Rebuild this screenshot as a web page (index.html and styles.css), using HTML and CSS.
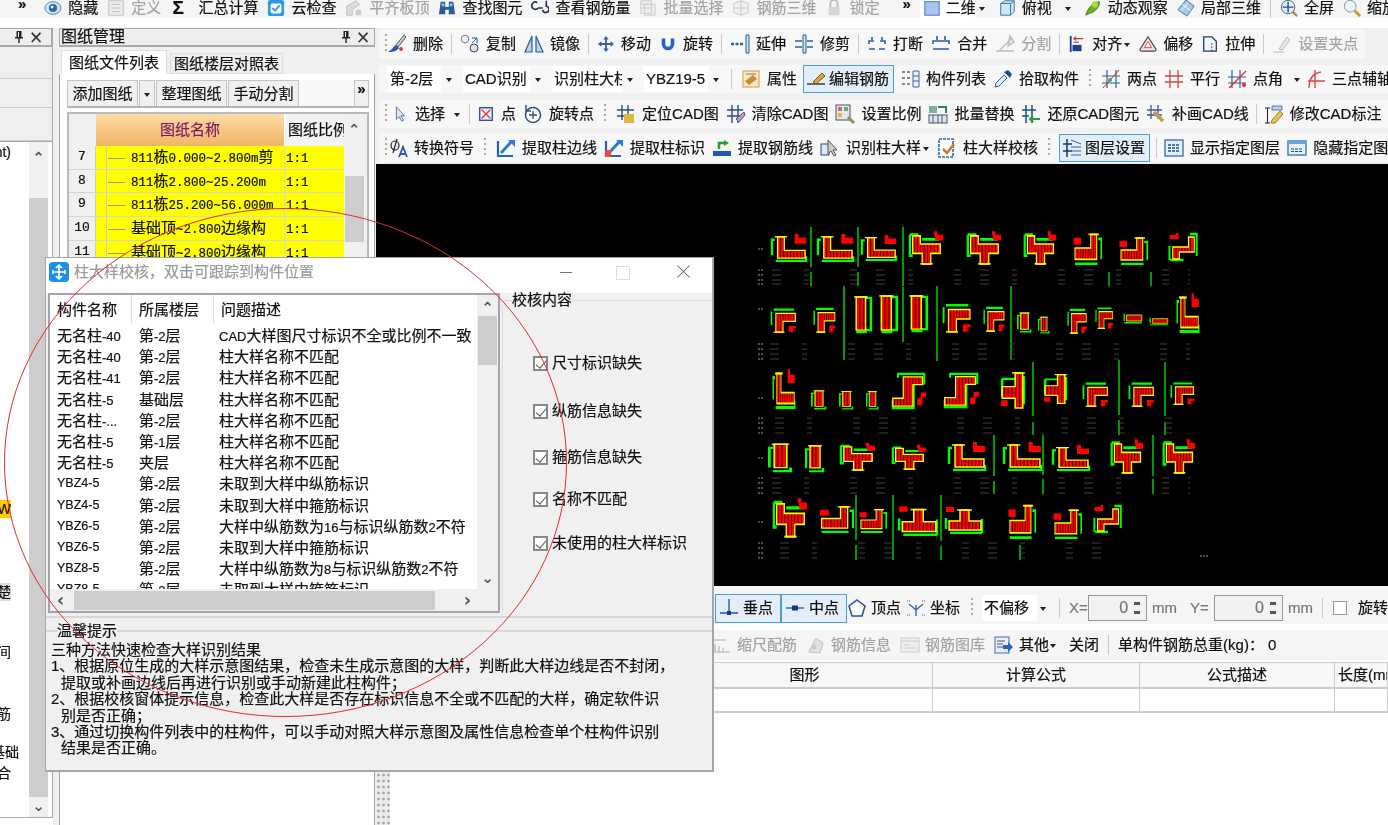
FILE: index.html
```html
<!DOCTYPE html>
<html lang="zh-CN">
<head>
<meta charset="utf-8">
<title>柱大样校核</title>
<link rel="stylesheet" href="styles.css">
</head>
<body>
<svg class="defs" aria-hidden="true">
<defs>
<pattern id="h" width="3.500" height="3" patternUnits="userSpaceOnUse"><rect width="3.500" height="3" fill="#f00"/><rect width="1" height="3" fill="#300"/></pattern>
<symbol id="L" viewBox="0 0 40 30" preserveAspectRatio="none"><path class="g" d="M5 7H2V23M6 29H38V24"/><path class="c" d="M8 4H15V18H37V26H8Z"/><path class="y" d="M5 4H18"/><path class="l" d="M26 1h4v4h8v6H26z"/></symbol>
<symbol id="J" viewBox="0 0 40 30" preserveAspectRatio="none"><path class="g" d="M35 7H39V25M4 29H34"/><path class="c" d="M25 3H33V25H4V15H25Z"/><path class="y" d="M22 3H36"/><path class="l" d="M2 6h10v6H2z"/></symbol>
<symbol id="G" viewBox="0 0 40 30" preserveAspectRatio="none"><path class="g" d="M5 3H33M2 5V20"/><path class="c" d="M8 7H35V16H18V28H8Z"/><path class="y" d="M5 28H20"/><path class="l" d="M26 21h10v3h-4v4h-6z"/></symbol>
<symbol id="T" viewBox="0 0 40 30" preserveAspectRatio="none"><path class="g" d="M3 4V22H6M3 4H12M16 8H34"/><path class="c" d="M6 5H14V12H35V20H25V29H16V20H6Z"/><path class="y" d="M14 29H27"/><path class="l" d="M28 1h4v3h6v5h-8z"/></symbol>
<symbol id="U" viewBox="0 0 40 30" preserveAspectRatio="none"><path class="g" d="M2 14V25M6 29H38M38 15V29"/><path class="c" d="M16 6H25V17H37V26H5V17H16Z"/><path class="y" d="M13 6H28"/><path class="l" d="M2 3h8v5H2z"/></symbol>
<symbol id="I" viewBox="0 0 20 40" preserveAspectRatio="none"><path class="g" d="M13 3H18V36H13M4 38H14"/><path class="c" d="M4 2H13V36H4Z"/><path class="y" d="M2 2H15"/></symbol>
<symbol id="K" viewBox="0 0 20 40" preserveAspectRatio="none"><path class="g" d="M4 12H1V34M4 38H18V34"/><path class="c" d="M5 8H15V34H5Z"/><path class="y" d="M3 8H17"/></symbol>
<symbol id="H" viewBox="0 0 40 30" preserveAspectRatio="none"><path class="g" d="M4 8V20M4 23H36"/><path class="c" d="M8 10H36V20H8Z"/></symbol>
<symbol id="S" viewBox="0 0 40 40" preserveAspectRatio="none"><path class="g" d="M8 7V3H38V14M26 14V38H2V30"/><path class="c" d="M14 6H36V14H25V36H2V28H14Z"/><path class="l" d="M34 22h6v5h-4v8h-6v-7h4z"/></symbol>
<symbol id="E" viewBox="0 0 24 40" preserveAspectRatio="none"><path class="g" d="M2 8H16M2 8V26M22 5V34"/><path class="c" d="M14 2H21V38H14V28H2V16H14Z"/><path class="y" d="M11 2H23"/><path class="l" d="M1 30h6v6H1z"/></symbol>
<symbol id="Z" viewBox="0 0 40 30" preserveAspectRatio="none"><path class="g" d="M28 2H36V24M4 28H20M3 14V28"/><path class="c" d="M26 5H33V20H15V27H7V15H26Z"/><path class="l" d="M3 3h8v-2h3v6H3z"/></symbol>

<symbol id="i-pin" viewBox="0 0 12 14"><path d="M3.500 1H8.500V7H10V8.500H6.700V13H5.300V8.500H2V7H3.500ZM5 2V7H6V2Z" fill="#222" fill-rule="evenodd"/></symbol>
<symbol id="i-eye" viewBox="0 0 20 20"><ellipse cx="10" cy="10" rx="9" ry="7" fill="#cfe2f5" stroke="#4a7fb0"/><circle cx="10" cy="10" r="4.5" fill="#2c6aa8"/><circle cx="9" cy="9" r="1.5" fill="#fff"/></symbol>
<symbol id="i-doc" viewBox="0 0 20 20"><path d="M2 2H18V18H2Z M5 6H15M5 10H15M5 14H15" fill="#eee" stroke="#bbb"/></symbol>
<symbol id="i-cloud" viewBox="0 0 20 20"><rect x="1" y="1" width="18" height="18" rx="3" fill="#2b9be8"/><rect x="4" y="5" width="12" height="11" rx="2" fill="#fff"/><path d="M6 10L9 13L14 7" fill="none" stroke="#2b9be8" stroke-width="2"/></symbol>
<symbol id="i-level" viewBox="0 0 20 20"><path d="M2 18V8L12 2L16 6L8 12V18Z" fill="#ddd" stroke="#bbb"/><path d="M12 12H18V18H12Z" fill="#ccc"/></symbol>
<symbol id="i-bino" viewBox="0 0 20 20"><path d="M3 3H8V9H12V3H17L19 17H12V12H8V17H1Z" fill="#2a5c9a"/><path d="M4 5H7V8H4ZM13 5H16V8H13Z" fill="#9cc0e6"/></symbol>
<symbol id="i-glass" viewBox="0 0 20 20"><path d="M7 4A4 4 0 1 0 8 10M13 12A3.5 3.5 0 1 0 17 8V2M8 10H13" fill="none" stroke="#234" stroke-width="1.8"/></symbol>
<symbol id="i-batch" viewBox="0 0 20 20"><path d="M2 2H14V16H2ZM6 6H18V18H6ZM2 6H14M2 10H14" fill="#eee" stroke="#ccc"/></symbol>
<symbol id="i-grid" viewBox="0 0 20 20"><path d="M2 5L10 2L18 5V15L10 18L2 15ZM10 2V18M2 10H18" fill="#f1f1f1" stroke="#c4c4c4"/></symbol>
<symbol id="i-lock" viewBox="0 0 20 20"><path d="M6 9V5A4 4 0 0 1 14 5V9" fill="none" stroke="#bbb" stroke-width="2"/><rect x="4" y="9" width="12" height="9" fill="#d4d4d4"/></symbol>
<symbol id="i-sq" viewBox="0 0 20 20"><rect x="2" y="3" width="16" height="15" fill="#a9c4ee" stroke="#3e6fc4"/></symbol>
<symbol id="i-box" viewBox="0 0 20 20"><path d="M3 5L8 2H18V14L14 18H3ZM3 5H14V18M14 5L18 2" fill="#cfe6f6" stroke="#2a6d9c"/></symbol>
<symbol id="i-orbit" viewBox="0 0 20 20"><path d="M2 18C4 10 10 4 17 3C18 8 12 15 6 16Z" fill="#6cae2a" stroke="#3d7a10"/><circle cx="12" cy="6" r="3.5" fill="#b7d93a"/></symbol>
<symbol id="i-local" viewBox="0 0 20 20"><path d="M10 1L19 8L11 19L1 12Z" fill="#a7c8ea" stroke="#3a6a9a"/><path d="M6 6L15 13M12 4L5 13" stroke="#fff"/></symbol>
<symbol id="i-full" viewBox="0 0 20 20"><circle cx="9" cy="9" r="7.5" fill="#e0ecf8" stroke="#34608f"/><path d="M9 3V15M3 9H15" stroke="#24508a" stroke-width="1.6"/><path d="M14 14L19 19" stroke="#b78a2a" stroke-width="2.5"/></symbol>
<symbol id="i-zoom" viewBox="0 0 20 20"><circle cx="8" cy="8" r="6.5" fill="#eef3f8" stroke="#7a8b9c"/><path d="M13 13L19 19" stroke="#c69a2b" stroke-width="3"/></symbol>
<symbol id="i-brush" viewBox="0 0 20 20"><path d="M9 11L17 1L19 3L11 13Z" fill="#c9ced6" stroke="#555"/><path d="M9 11L12 14C9 18 5 18 1 18C5 16 6 13 9 11Z" fill="#2256b8"/><circle cx="14" cy="15" r="2" fill="#e33"/></symbol>
<symbol id="i-copy" viewBox="0 0 20 20"><circle cx="5" cy="5" r="3.8" fill="#eef" stroke="#778"/><circle cx="14" cy="14" r="4" fill="#dde" stroke="#445"/><path d="M12 4H17V9M17 4L12 9" fill="none" stroke="#25a"/></symbol>
<symbol id="i-mirror" viewBox="0 0 20 20"><path d="M8 2V18H1ZM12 2V18H19Z" fill="#bcd4ee" stroke="#2a5f9e" stroke-width="1.2"/></symbol>
<symbol id="i-move" viewBox="0 0 20 20"><path d="M10 1L13 5H11V9H15V7L19 10L15 13V11H11V15H13L10 19L7 15H9V11H5V13L1 10L5 7V9H9V5H7Z" fill="#33669e"/></symbol>
<symbol id="i-rot" viewBox="0 0 20 20"><path d="M5 4V10A5 5 0 0 0 15 10V4" fill="none" stroke="#2a62c8" stroke-width="4"/></symbol>
<symbol id="i-ext" viewBox="0 0 20 20"><path d="M16 1H19V19H16Z" fill="#cfe0f2" stroke="#2a5f9e"/><path d="M1 10H14" stroke="#2a5f9e" stroke-width="2.5" stroke-dasharray="3 1.5"/></symbol>
<symbol id="i-trim" viewBox="0 0 20 20"><path d="M9 1H12V19H9Z" fill="#cfe0f2" stroke="#2a5f9e"/><path d="M1 7H8M1 13H8M13 7H19M13 13H19" stroke="#2a5f9e" stroke-width="1.4"/></symbol>
<symbol id="i-brk" viewBox="0 0 20 20"><path d="M2 10V7H7M18 10V7H13M2 15H8M12 15H18M5 3V6M15 3V6" fill="none" stroke="#2a5f9e" stroke-width="1.6"/></symbol>
<symbol id="i-mrg" viewBox="0 0 20 20"><path d="M2 10V7H18V10M2 15H18M6 2V6M14 2V6" fill="none" stroke="#2a5f9e" stroke-width="1.6"/></symbol>
<symbol id="i-split" viewBox="0 0 20 20"><path d="M1 17H19M4 17L16 5M15 2L19 8L13 12Z" fill="#e8e8e8" stroke="#bbb" stroke-width="1.4"/></symbol>
<symbol id="i-align" viewBox="0 0 20 20"><path d="M3 1V19" stroke="#1b3f8a" stroke-width="2"/><rect x="5" y="11" width="10" height="7" fill="#1b3f8a"/><path d="M6 4H17M6 4L9 2M6 4L9 6" stroke="#c33" fill="none" stroke-width="1.2"/><path d="M6 8H12" stroke="#1b3f8a"/></symbol>
<symbol id="i-off" viewBox="0 0 20 20"><path d="M10 2L19 16A2 2 0 0 1 17 18H3A2 2 0 0 1 1 16Z" fill="#f2e1de" stroke="#444" stroke-width="1.3"/><path d="M10 7L14 14H6Z" fill="#fff" stroke="#d44"/></symbol>
<symbol id="i-str" viewBox="0 0 20 20"><path d="M3 2H12L17 7V18H3Z" fill="#f4f8fc" stroke="#123a72" stroke-width="1.4"/><path d="M12 9V18" stroke="#123a72" stroke-dasharray="2 1.5"/></symbol>
<symbol id="i-grip" viewBox="0 0 20 20"><path d="M1 18H12M7 15L15 3L18 6L10 16Z" fill="#e8e8e8" stroke="#bbb"/></symbol>
<symbol id="i-prop" viewBox="0 0 20 20"><rect x="2" y="2" width="16" height="16" fill="#fbe7c4" stroke="#d99a3a"/><path d="M4 12L12 6L16 10L8 16Z" fill="#c98f2c"/><path d="M5 5H15" stroke="#777"/></symbol>
<symbol id="i-bar" viewBox="0 0 20 20"><path d="M1 15H19" stroke="#222" stroke-width="1.3"/><path d="M7 13L16 4L19 7L10 15Z" fill="#d9a441" stroke="#7a5a1a"/></symbol>
<symbol id="i-list" viewBox="0 0 20 20"><path d="M13 2H19V18H13ZM13 7H19M13 12H19" fill="#eef" stroke="#3a6a9a"/><path d="M2 3H5M7 3H10M2 9H5M7 9H10M2 15H5M7 15H10" stroke="#567" stroke-width="1.6"/></symbol>
<symbol id="i-drop" viewBox="0 0 20 20"><path d="M2 18L3 14L11 6L14 9L6 17Z" fill="#dfefff" stroke="#2a5f9e"/><path d="M11 3L17 9L19 5L15 1Z" fill="#1c4f9c"/></symbol>
<symbol id="i-two" viewBox="0 0 20 20"><path d="M6 1V19M15 1V19M1 7H19M1 14H19" stroke="#2a5f9e" stroke-width="1.2"/><path d="M2 19L18 1" stroke="#d22"/><circle cx="9" cy="11" r="2" fill="#4a4"/></symbol>
<symbol id="i-par" viewBox="0 0 20 20"><path d="M6 1V19M14 1V19M1 7H19M1 13H19" stroke="#c84a4a" stroke-width="1.3"/></symbol>
<symbol id="i-ang" viewBox="0 0 20 20"><path d="M5 1V19M13 1V19M1 8H19M1 14H19" stroke="#2a5f9e" stroke-width="1.2"/><path d="M2 19L19 2" stroke="#e22" stroke-width="1.3"/><circle cx="17" cy="16" r="2" fill="#e22"/></symbol>
<symbol id="i-arc" viewBox="0 0 20 20"><path d="M3 19C3 9 8 4 15 3M9 1V19M2 12H19" fill="none" stroke="#d44" stroke-width="1.4"/></symbol>
<symbol id="i-cur" viewBox="0 0 20 20"><path d="M6 2V16L9 13L12 18L14 17L11 12H15Z" fill="#dfe8f5" stroke="#506a8c"/></symbol>
<symbol id="i-pt" viewBox="0 0 20 20"><rect x="3" y="3" width="14" height="14" fill="#f2f2fb" stroke="#2a4f9e" stroke-width="1.5"/><path d="M5 5L15 15M15 5L5 15" stroke="#d33" stroke-width="1.3"/></symbol>
<symbol id="i-rp" viewBox="0 0 20 20"><circle cx="10" cy="11" r="7.5" fill="#fff" stroke="#2a4f7e" stroke-width="1.5"/><path d="M10 7V15M6 11H14" stroke="#2a4f7e" stroke-width="1.3"/><path d="M3 1V7H8" fill="none" stroke="#2a4f7e" stroke-width="1.5"/></symbol>
<symbol id="i-loc" viewBox="0 0 20 20"><path d="M6 1V16M12 1V16M1 6H18M1 12H18" stroke="#1f4f8a" stroke-width="1.4"/><rect x="8" y="10" width="10" height="9" fill="#e0b93c"/></symbol>
<symbol id="i-clr" viewBox="0 0 20 20"><path d="M6 1V19M12 1V19M1 6H17M1 12H17" stroke="#1f4f8a" stroke-width="1.4"/><path d="M10 15L18 8L19 11L13 18Z" fill="#b9a0c8" stroke="#555"/></symbol>
<symbol id="i-scale" viewBox="0 0 20 20"><rect x="1" y="1" width="14" height="15" fill="#dde8f4" stroke="#456"/><rect x="3" y="3" width="4" height="4" fill="#d66"/><rect x="9" y="3" width="4" height="4" fill="#6a6"/><rect x="3" y="9" width="4" height="4" fill="#fa3"/><path d="M13 13L19 19" stroke="#986" stroke-width="3"/></symbol>
<symbol id="i-rep" viewBox="0 0 20 20"><rect x="1" y="2" width="8" height="7" fill="#7ab2a2"/><path d="M10 3H18V9" fill="none" stroke="#3a7a5a" stroke-width="2"/><rect x="1" y="11" width="18" height="8" fill="#dfe6f0" stroke="#456"/><path d="M5 11V19M10 11V19M14 11V19" stroke="#456"/></symbol>
<symbol id="i-rst" viewBox="0 0 20 20"><path d="M5 1V19M11 1V19M1 6H15M1 12H8" stroke="#1f4f8a" stroke-width="1.5"/><path d="M9 15H19M12 12L9 15L12 18" fill="none" stroke="#2a9a3a" stroke-width="2"/></symbol>
<symbol id="i-pat" viewBox="0 0 20 20"><path d="M5 1V15M12 1V15M1 6H16M1 11H16" stroke="#3a5a9a" stroke-width="1.3"/><path d="M8 8L17 17" stroke="#c89a4a" stroke-width="3.5"/></symbol>
<symbol id="i-mod" viewBox="0 0 20 20"><path d="M1 4H6M3.500 4V19M1 19H6" stroke="#222"/><path d="M8 16L16 7L19 10L11 19H7Z" fill="#e6c35a" stroke="#a07c20"/><path d="M8 2H18V6H8Z" fill="#bcd4ee" stroke="#2a5f9e" stroke-width=".8"/></symbol>
<symbol id="i-phi" viewBox="0 0 20 20"><path d="M9 1L5 15" stroke="#222" stroke-width="1.2"/><ellipse cx="7" cy="7.500" rx="4" ry="4.500" fill="none" stroke="#222" stroke-width="1.2"/><path d="M11 19L15 9L19 19M12.500 16H17.500" fill="none" stroke="#2a5fb0" stroke-width="1.8"/></symbol>
<symbol id="i-ex1" viewBox="0 0 20 20"><path d="M2 3V18H17" fill="none" stroke="#2a62b8" stroke-width="2.2"/><path d="M5 15L16 3" stroke="#2a7ad8" stroke-width="3"/><path d="M12 2H19V9Z" fill="#2a7ad8"/></symbol>
<symbol id="i-ex2" viewBox="0 0 20 20"><path d="M2 3V18H17" fill="none" stroke="#2a62b8" stroke-width="2.2"/><path d="M5 15L16 3" stroke="#2a7ad8" stroke-width="3"/><path d="M12 2H19V9Z" fill="#2a7ad8"/><rect x="1" y="12" width="6" height="7" fill="#e44"/></symbol>
<symbol id="i-ex3" viewBox="0 0 20 20"><rect x="1" y="13" width="18" height="5" fill="#1f57b8"/><path d="M7 11V5H13" fill="none" stroke="#2aa02a" stroke-width="2.6"/><path d="M12 2L17 5L12 8Z" fill="#2aa02a"/></symbol>
<symbol id="i-arw" viewBox="0 0 20 20"><rect x="1" y="6" width="8" height="11" fill="#dfe8f5" stroke="#1d4f9e"/><path d="M8 2V16L11 13L14 18L16 17L13 12H17Z" fill="#ccc" stroke="#555"/></symbol>
<symbol id="i-chk" viewBox="0 0 20 20"><path d="M2 1H16V19H2Z" fill="#fff" stroke="#1d6fb8" stroke-width="1.6" stroke-dasharray="3 1"/><path d="M6 11L10 15L17 6" fill="none" stroke="#c87a2a" stroke-width="2.5"/></symbol>
<symbol id="i-lay" viewBox="0 0 20 20"><path d="M5 1V19M1 6H10M1 13H10" stroke="#123a72" stroke-width="1.5"/><path d="M9 9H19M9 13H19M9 17H19" stroke="#2a62b8" stroke-width="1.2"/><path d="M9 2L19 6" stroke="#2a62b8"/></symbol>
<symbol id="i-cad1" viewBox="0 0 20 20"><rect x="1" y="2" width="18" height="16" fill="#e5f0fb" stroke="#2a6fb8" stroke-width="1.3"/><path d="M4 7H16M4 10H16M4 13H16" stroke="#1c4f9c" stroke-width="1.4" stroke-dasharray="3 1"/></symbol>
<symbol id="i-cad2" viewBox="0 0 20 20"><rect x="1" y="3" width="18" height="14" fill="#e5f0fb" stroke="#2a6fb8" stroke-width="1.3"/><rect x="1" y="3" width="18" height="3" fill="#6aa5dc"/><path d="M4 11H16M4 13.500H16" stroke="#1c4f9c" stroke-width="1.200" stroke-dasharray="3 1"/></symbol>
<symbol id="i-perp" viewBox="0 0 20 20"><path d="M10 1V15M1 15H19" stroke="#1f4fb0" stroke-width="1.3"/><rect x="8" y="13" width="4" height="4" fill="#123a8a"/></symbol>
<symbol id="i-mid" viewBox="0 0 20 20"><path d="M1 10H19" stroke="#1f4fb0" stroke-width="1.3"/><rect x="7" y="7.500" width="6" height="5" fill="#123a8a"/></symbol>
<symbol id="i-vtx" viewBox="0 0 20 20"><path d="M10 2L18 8L15 18H5L2 8Z" fill="#fff" stroke="#1f4f9e" stroke-width="1.5"/></symbol>
<symbol id="i-xy" viewBox="0 0 20 20"><path d="M10 7V18M10 12L17 6M10 12L3 6" stroke="#2a6fb8" stroke-width="1.4" fill="none"/><path d="M1 3H4M16 3H19M1 17H4M16 17H19" stroke="#555" stroke-dasharray="1 1"/></symbol>
<symbol id="i-shr" viewBox="0 0 20 20"><path d="M1 5H14M1 17H18M3 9V17M7 11V17M11 13V17" stroke="#c4c4c4" stroke-width="1.5"/></symbol>
<symbol id="i-inf" viewBox="0 0 20 20"><path d="M3 17L10 3L17 8L14 18Z" fill="#e2e2e2" stroke="#c0c0c0"/><circle cx="8" cy="12" r="2.500" fill="#ccc"/></symbol>
<symbol id="i-lib" viewBox="0 0 20 20"><rect x="1" y="3" width="18" height="14" fill="#eee" stroke="#ccc"/><path d="M1 6H19M4 10H10M4 13H16" stroke="#ccc"/></symbol>
<symbol id="i-oth" viewBox="0 0 20 20"><rect x="1" y="2" width="14" height="16" fill="#e8f1fb" stroke="#3a6fb8"/><path d="M3 6H11M3 9H9M3 12H9" stroke="#456"/><path d="M9 10H14V7L19 12L14 17V14H9Z" fill="#2a62c8"/></symbol>
<symbol id="i-logo" viewBox="0 0 20 20"><rect width="20" height="20" rx="4" fill="#1890f0"/><path d="M10 3V17M4 10H16M7 6L10 3L13 6M4 8V12M16 8V12M7 14L10 17L13 14" fill="none" stroke="#fff" stroke-width="1.7"/></symbol>
</defs>
</svg>

<div class="app">
  <header class="topbar">
    <span class="more">»</span>
    <span class="tool"><svg class="ic"><use href="#i-eye"/></svg>隐藏</span>
    <span class="tool off"><svg class="ic"><use href="#i-doc"/></svg>定义</span>
    <span class="tool"><b class="sigma">Σ</b>汇总计算</span>
    <span class="tool"><svg class="ic"><use href="#i-cloud"/></svg>云检查</span>
    <span class="tool off"><svg class="ic"><use href="#i-level"/></svg>平齐板顶</span>
    <span class="tool"><svg class="ic"><use href="#i-bino"/></svg>查找图元</span>
    <span class="tool"><svg class="ic"><use href="#i-glass"/></svg>查看钢筋量</span>
    <span class="tool off"><svg class="ic"><use href="#i-batch"/></svg>批量选择</span>
    <span class="tool off"><svg class="ic"><use href="#i-grid"/></svg>钢筋三维</span>
    <span class="tool off"><svg class="ic"><use href="#i-lock"/></svg>锁定</span>
    <span class="more more-2">»</span>
    <span class="combo combo-2d"><svg class="ic"><use href="#i-sq"/></svg>二维</span><i class="caret"></i>
    <span class="tool"><svg class="ic"><use href="#i-box"/></svg>俯视</span><i class="caret"></i>
    <span class="tool"><svg class="ic"><use href="#i-orbit"/></svg>动态观察</span>
    <span class="tool"><svg class="ic"><use href="#i-local"/></svg>局部三维</span>
    <i class="sep"></i>
    <span class="tool"><svg class="ic"><use href="#i-full"/></svg>全屏</span>
    <span class="tool"><svg class="ic"><use href="#i-zoom"/></svg>缩放</span>
  </header>

  <aside class="side">
    <div class="dock-head"><span class="grow"></span><svg class="pin"><use href="#i-pin"/></svg><span class="x">×</span></div>
    <div class="side-btn b1"></div>
    <div class="side-btn b2"></div>
    <div class="side-btn b3"></div>
    <div class="side-list">
      <div class="tree">
        <span class="t1">nt)</span>
        <span class="t2"><em>tW</em></span>
        <span class="t3"><u>楚</u></span>
        <span class="t4">间</span>
        <span class="t5">筋</span>
        <span class="t6">基础</span>
        <span class="t7">合</span>
      </div>
      <div class="vbar"><span class="up">⌃</span><span class="thumb"></span><span class="down">⌄</span></div>
    </div>
  </aside>

  <section class="drawings">
    <div class="dock-head"><span class="dock-title">图纸管理</span><span class="grow"></span><svg class="pin"><use href="#i-pin"/></svg><span class="x">×</span></div>
    <div class="tabs"><span class="tab on">图纸文件列表</span><span class="tab">图纸楼层对照表</span></div>
    <div class="tabpane">
      <div class="dtools">
        <span class="dbtn w71">添加图纸</span><span class="dbtn w15"><i class="caret"></i></span><span class="dbtn w71">整理图纸</span><span class="dbtn w71">手动分割</span>
        <span class="grow"></span><span class="dbtn chev">»</span>
      </div>
      <div class="dtable">
        <div class="dhead"><span class="dnum"></span><span class="dname">图纸名称</span><span class="dratio">图纸比例</span></div>
        <div class="drow"><span class="dnum">7</span><span class="dsub"></span><span class="dtxt"><span class="m">811</span>栋<span class="m">0.000~2.800m</span>剪</span><span class="dr"><span class="m">1:1</span></span></div>
        <div class="drow"><span class="dnum">8</span><span class="dsub"></span><span class="dtxt"><span class="m">811</span>栋<span class="m">2.800~25.200m</span></span><span class="dr"><span class="m">1:1</span></span></div>
        <div class="drow"><span class="dnum">9</span><span class="dsub"></span><span class="dtxt"><span class="m">811</span>栋<span class="m">25.200~56.000m</span></span><span class="dr"><span class="m">1:1</span></span></div>
        <div class="drow"><span class="dnum">10</span><span class="dsub"></span><span class="dtxt">基础顶<span class="m">~2.800</span>边缘构</span><span class="dr"><span class="m">1:1</span></span></div>
        <div class="drow"><span class="dnum">11</span><span class="dsub"></span><span class="dtxt">基础顶<span class="m">~2.800</span>边缘构</span><span class="dr"><span class="m">1:1</span></span></div>
        <div class="dscroll"><span class="up">⌃</span><span class="thumb"></span></div>
      </div>
    </div>
  </section>

  <main class="main">
    <div class="bar r1">
      <i class="grip first"></i>
      <span class="tool"><svg class="ic lg"><use href="#i-brush"/></svg>删除</span><i class="sep"></i>
      <span class="tool"><svg class="ic lg"><use href="#i-copy"/></svg>复制</span>
      <span class="tool"><svg class="ic lg"><use href="#i-mirror"/></svg>镜像</span><i class="sep"></i>
      <span class="tool"><svg class="ic"><use href="#i-move"/></svg>移动</span>
      <span class="tool"><svg class="ic"><use href="#i-rot"/></svg>旋转</span><i class="sep"></i>
      <span class="tool"><svg class="ic lg"><use href="#i-ext"/></svg>延伸</span>
      <span class="tool"><svg class="ic lg"><use href="#i-trim"/></svg>修剪</span><i class="sep"></i>
      <span class="tool"><svg class="ic lg"><use href="#i-brk"/></svg>打断</span>
      <span class="tool"><svg class="ic lg"><use href="#i-mrg"/></svg>合并</span>
      <span class="tool off"><svg class="ic lg"><use href="#i-split"/></svg>分割</span><i class="sep"></i>
      <span class="tool"><svg class="ic"><use href="#i-align"/></svg>对齐<i class="caret sm"></i></span>
      <span class="tool"><svg class="ic"><use href="#i-off"/></svg>偏移</span>
      <span class="tool"><svg class="ic"><use href="#i-str"/></svg>拉伸</span><i class="sep"></i>
      <span class="tool off"><svg class="ic lg"><use href="#i-grip"/></svg>设置夹点</span>
    </div>
    <div class="bar r2">
      <span class="combo w53">第-2层</span><i class="caret c14"></i>
      <span class="combo w67">CAD识别</span><i class="caret c14"></i>
      <span class="combo w70 clip">识别柱大柱</span><i class="caret c14"></i>
      <span class="combo w64">YBZ19-5</span><i class="caret c14"></i>
      <i class="sep"></i>
      <span class="tool"><svg class="ic lg"><use href="#i-prop"/></svg>属性</span>
      <span class="tool active"><svg class="ic lg"><use href="#i-bar"/></svg>编辑钢筋</span>
      <span class="tool"><svg class="ic lg"><use href="#i-list"/></svg>构件列表</span>
      <span class="tool"><svg class="ic lg"><use href="#i-drop"/></svg>拾取构件</span>
      <i class="grip gap"></i>
      <span class="tool"><svg class="ic lg"><use href="#i-two"/></svg>两点</span>
      <span class="tool"><svg class="ic lg"><use href="#i-par"/></svg>平行</span>
      <span class="tool"><svg class="ic lg"><use href="#i-ang"/></svg>点角</span><i class="caret tight-c"></i>
      <span class="tool"><svg class="ic lg"><use href="#i-arc"/></svg>三点辅轴</span>
    </div>
    <div class="bar r3">
      <i class="grip first"></i>
      <span class="tool"><svg class="ic"><use href="#i-cur"/></svg>选择</span><i class="caret"></i><i class="sep"></i>
      <span class="tool"><svg class="ic"><use href="#i-pt"/></svg>点</span>
      <span class="tool"><svg class="ic lg"><use href="#i-rp"/></svg>旋转点</span>
      <i class="grip gap"></i>
      <span class="tool"><svg class="ic lg"><use href="#i-loc"/></svg>定位CAD图</span>
      <span class="tool"><svg class="ic lg"><use href="#i-clr"/></svg>清除CAD图</span>
      <span class="tool"><svg class="ic lg"><use href="#i-scale"/></svg>设置比例</span>
      <span class="tool"><svg class="ic lg"><use href="#i-rep"/></svg>批量替换</span>
      <span class="tool"><svg class="ic lg"><use href="#i-rst"/></svg>还原CAD图元</span>
      <span class="tool"><svg class="ic lg"><use href="#i-pat"/></svg>补画CAD线</span>
      <i class="sep"></i>
      <span class="tool"><svg class="ic lg"><use href="#i-mod"/></svg>修改CAD标注</span>
    </div>
    <div class="bar r4">
      <i class="grip first"></i>
      <span class="tool"><svg class="ic lg"><use href="#i-phi"/></svg>转换符号</span>
      <i class="grip gap"></i>
      <span class="tool"><svg class="ic lg"><use href="#i-ex1"/></svg>提取柱边线</span>
      <span class="tool"><svg class="ic lg"><use href="#i-ex2"/></svg>提取柱标识</span>
      <span class="tool"><svg class="ic lg"><use href="#i-ex3"/></svg>提取钢筋线</span>
      <span class="tool"><svg class="ic lg"><use href="#i-arw"/></svg>识别柱大样<i class="caret sm"></i></span>
      <span class="tool"><svg class="ic lg"><use href="#i-chk"/></svg>柱大样校核</span>
      <i class="grip gap"></i>
      <span class="tool active"><svg class="ic lg"><use href="#i-lay"/></svg>图层设置</span><i class="sep"></i>
      <span class="tool"><svg class="ic lg"><use href="#i-cad1"/></svg>显示指定图层</span>
      <span class="tool"><svg class="ic lg"><use href="#i-cad2"/></svg>隐藏指定图层</span>
    </div>

    <div class="canvas">
      <svg class="cad" viewBox="376 164 1012 422" width="1012" height="422">
        <path class="gl" d="M811 227V267M811 272V286M858 227V267M858 272V286M903 227V286M1109 272V286M1151 272V286M844 286V360M903 287V342M937 286V361M1011 286V360M1033 362V416M1033 422V435M1119 360V415M1119 420V435M1165 362V416M1165 422V435M994 435V476M994 481V494M1043 435V475M1043 479V494M1153 435V476M1153 479V494M856 495V540M856 545V560M893 495V560M941 495V541M941 546V560M1020 545V560"/>
        <use href="#L" x="770" y="233" width="38" height="29"/><use href="#L" x="816" y="233" width="39" height="29"/><use href="#L" x="860" y="234" width="38" height="27"/>
        <use href="#T" x="907" y="230" width="38" height="35"/><use href="#T" x="965" y="230" width="38" height="35"/><use href="#T" x="1022" y="230" width="36" height="35"/>
        <use href="#J" x="1072" y="231" width="30" height="34"/><use href="#J" x="1118" y="235" width="30" height="30"/><use href="#Z" x="1167" y="232" width="33" height="30"/>
        <use href="#G" x="770" y="307" width="29" height="27"/><use href="#G" x="813" y="306" width="25" height="28"/>
        <use href="#I" x="852" y="295" width="21" height="39"/><use href="#I" x="877" y="294" width="22" height="40"/><use href="#I" x="907" y="294" width="22" height="39"/>
        <use href="#G" x="942" y="302" width="32" height="32"/><use href="#G" x="983" y="305" width="24" height="28"/>
        <use href="#K" x="1017" y="308" width="15" height="25"/><use href="#K" x="1038" y="313" width="12" height="21"/>
        <use href="#G" x="1067" y="307" width="22" height="28"/><use href="#G" x="1095" y="306" width="20" height="24"/>
        <use href="#H" x="1122" y="309" width="22" height="18"/><use href="#H" x="1148" y="314" width="22" height="14"/>
        <use href="#L" x="1176" y="292" width="24" height="41"/>
        <use href="#L" x="772" y="368" width="24" height="41"/>
        <use href="#K" x="811" y="386" width="16" height="24"/><use href="#K" x="839" y="387" width="15" height="23"/><use href="#K" x="866" y="387" width="13" height="23"/>
        <use href="#S" x="891" y="371" width="35" height="39"/><use href="#S" x="943" y="371" width="36" height="38"/>
        <use href="#E" x="1000" y="371" width="26" height="39"/><use href="#E" x="1043" y="373" width="25" height="32"/>
        <use href="#G" x="1082" y="381" width="29" height="27"/><use href="#G" x="1128" y="381" width="29" height="27"/><use href="#G" x="1170" y="381" width="27" height="25"/>
        <use href="#K" x="768" y="437" width="25" height="36"/><use href="#K" x="805" y="439" width="20" height="34"/>
        <use href="#T" x="838" y="442" width="39" height="29"/><use href="#T" x="890" y="444" width="38" height="26"/>
        <use href="#L" x="947" y="441" width="40" height="30"/><use href="#L" x="1002" y="441" width="41" height="30"/><use href="#L" x="1051" y="444" width="40" height="27"/>
        <use href="#T" x="1109" y="438" width="36" height="36"/><use href="#T" x="1161" y="438" width="36" height="36"/>
        <use href="#T" x="771" y="497" width="38" height="41"/>
        <use href="#J" x="818" y="504" width="36" height="29"/><use href="#J" x="858" y="507" width="29" height="26"/>
        <use href="#U" x="897" y="503" width="42" height="33"/><use href="#U" x="944" y="504" width="40" height="30"/>
        <use href="#J" x="1007" y="502" width="29" height="37"/><use href="#J" x="1052" y="507" width="30" height="32"/><use href="#Z" x="1092" y="504" width="32" height="30"/>
        <path class="txt" d="M772 270H1190M772 275H1190M772 280H1190M772 284H1190M770 344H1190M770 349H1190M770 354H1190M770 359H1190M775 418H1190M775 423H1190M775 428H1190M775 433H1190M772 478H1190M772 483H1190M772 488H1190M772 493H1190M780 543H1110M780 548H1110M780 553H1110M780 558H1110"/>
        <path class="txt2" d="M758 249H763M758 270H763M758 275H763M758 280H763M758 284H763M758 309H763M758 344H763M758 349H763M758 354H763M758 359H763M758 398H763M758 418H763M758 423H763M758 428H763M758 433H763M758 458H763M758 478H763M758 483H763M758 488H763M758 493H763M758 522H763M758 543H763M758 548H763M758 553H763M758 558H763M1200 556H1208"/>
      </svg>
    </div>

    <div class="lower">
      <i class="dock-grip"></i>
      <div class="lower-body">
        <div class="bar r5">
          <span class="tool active tight"><svg class="ic lg"><use href="#i-perp"/></svg>垂点</span>
          <span class="tool active tight"><svg class="ic lg"><use href="#i-mid"/></svg>中点</span>
          <span class="tool vtx"><svg class="ic lg"><use href="#i-vtx"/></svg>顶点</span>
          <span class="tool"><svg class="ic lg"><use href="#i-xy"/></svg>坐标</span>
          <i class="grip gap"></i>
          <span class="combo w55">不偏移</span><i class="caret c14"></i><i class="sep"></i>
          <span class="lbl">X=</span><span class="spin"><span>0</span><i class="arrows"></i></span><span class="lbl">mm</span><span class="lbl y">Y=</span><span class="spin wide"><span>0</span><i class="arrows"></i></span><span class="lbl">mm</span><i class="sep"></i>
          <span class="check-sm"></span><span class="rot">旋转</span>
        </div>
        <div class="bar r6">
          <span class="tool off"><svg class="ic lg"><use href="#i-shr"/></svg>缩尺配筋</span>
          <span class="tool off"><svg class="ic lg"><use href="#i-inf"/></svg>钢筋信息</span>
          <span class="tool off"><svg class="ic lg"><use href="#i-lib"/></svg>钢筋图库</span>
          <span class="tool"><svg class="ic lg"><use href="#i-oth"/></svg>其他<i class="caret sm"></i></span>
          <span class="tool close-btn">关闭</span><i class="sep"></i>
          <span class="tool">单构件钢筋总重(kg)：&nbsp;0</span>
        </div>
        <div class="rebar">
          <div class="rb-row head"><span class="c1">图形</span><span class="c2">计算公式</span><span class="c3">公式描述</span><span class="c4">长度(mm)</span></div>
          <div class="rb-row"><span class="c1"></span><span class="c2"></span><span class="c3"></span><span class="c4"></span></div>
        </div>
      </div>
    </div>
  </main>

  <section class="dialog">
    <div class="d-title">
      <svg class="d-logo"><use href="#i-logo"/></svg>
      <span class="d-cap">柱大样校核，双击可跟踪到构件位置</span>
      <span class="grow"></span>
      <i class="wb min"></i><i class="wb max"></i><i class="wb close"></i>
    </div>
    <div class="d-top">
      <div class="d-list">
        <div class="d-view">
          <div class="d-head"><span>构件名称</span><span>所属楼层</span><span>问题描述</span></div>
          <div class="d-rows">
            <span>无名柱<span class="n">-40</span></span><span>第<span class="n">-2</span>层</span><span><span class="n">CAD</span>大样图尺寸标识不全或比例不一致</span>
            <span>无名柱<span class="n">-40</span></span><span>第<span class="n">-2</span>层</span><span>柱大样名称不匹配</span>
            <span>无名柱<span class="n">-41</span></span><span>第<span class="n">-2</span>层</span><span>柱大样名称不匹配</span>
            <span>无名柱<span class="n">-5</span></span><span>基础层</span><span>柱大样名称不匹配</span>
            <span>无名柱<span class="n">-...</span></span><span>第<span class="n">-2</span>层</span><span>柱大样名称不匹配</span>
            <span>无名柱<span class="n">-5</span></span><span>第<span class="n">-1</span>层</span><span>柱大样名称不匹配</span>
            <span>无名柱<span class="n">-5</span></span><span>夹层</span><span>柱大样名称不匹配</span>
            <span class="n">YBZ4-5</span><span>第<span class="n">-2</span>层</span><span>未取到大样中纵筋标识</span>
            <span class="n">YBZ4-5</span><span>第<span class="n">-2</span>层</span><span>未取到大样中箍筋标识</span>
            <span class="n">YBZ6-5</span><span>第<span class="n">-2</span>层</span><span>大样中纵筋数为<span class="n">16</span>与标识纵筋数<span class="n">2</span>不符</span>
            <span class="n">YBZ6-5</span><span>第<span class="n">-2</span>层</span><span>未取到大样中箍筋标识</span>
            <span class="n">YBZ8-5</span><span>第<span class="n">-2</span>层</span><span>大样中纵筋数为<span class="n">8</span>与标识纵筋数<span class="n">2</span>不符</span>
            <span class="n">YBZ8-5</span><span>第<span class="n">-2</span>层</span><span>未取到大样中箍筋标识</span>
          </div>
          <div class="d-vbar"><span class="up">⌃</span><span class="thumb"></span><span class="down">⌄</span></div>
        </div>
        <div class="d-hbar"><span class="arr">‹</span><span class="thumb"></span><span class="arr">›</span></div>
      </div>
      <fieldset class="d-group">
        <legend>校核内容</legend>
        <label class="ck k1"><i class="box"></i>尺寸标识缺失</label>
        <label class="ck k2"><i class="box"></i>纵筋信息缺失</label>
        <label class="ck k3"><i class="box"></i>箍筋信息缺失</label>
        <label class="ck k4"><i class="box"></i>名称不匹配</label>
        <label class="ck k5"><i class="box"></i>未使用的柱大样标识</label>
      </fieldset>
    </div>
    <fieldset class="d-tips">
      <legend>温馨提示</legend>
      <p>三种方法快速检查大样识别结果</p>
      <p>1、根据原位生成的大样示意图结果，检查未生成示意图的大样，判断此大样边线是否不封闭，</p>
      <p class="ind">提取或补画边线后再进行识别或手动新建此柱构件；</p>
      <p>2、根据校核窗体提示信息，检查此大样是否存在标识信息不全或不匹配的大样，确定软件识</p>
      <p class="ind">别是否正确；</p>
      <p>3、通过切换构件列表中的柱构件，可以手动对照大样示意图及属性信息检查单个柱构件识别</p>
      <p class="ind">结果是否正确。</p>
    </fieldset>
  </section>

  <svg class="ring" viewBox="0 0 1388 825" width="1388" height="825" aria-hidden="true"><ellipse cx="285.500" cy="462.500" rx="281" ry="254"/></svg>
</div>
</body>
</html>
```
FILE: styles.css
```css
*{box-sizing:border-box}
html,body{margin:0;height:100%;overflow:hidden;background:#fff}
body{font:15px/20px "Liberation Sans","Noto Sans CJK SC",sans-serif;color:#111;-webkit-text-stroke:.2px}
i,em{font-style:normal}
.defs{position:absolute;width:0;height:0}
.app{position:relative;display:grid;width:1388px;height:825px;grid-template-columns:53px 323px 1012px;grid-template-rows:28px 797px;background:#fff;overflow:hidden;filter:blur(.3px)}
.grow{flex:1}

.topbar{grid-column:1/-1;display:flex;align-items:center;gap:9px;height:20px;margin-top:-2px;padding-left:18px;background:#f5f5f5;white-space:nowrap;overflow:hidden}
.more{font-weight:700;width:12px;margin-top:-8px;margin-right:9px}
.more-2{margin-left:14px;margin-right:0}
.tool{display:inline-flex;align-items:center;gap:6px;flex:none;white-space:nowrap}
.tool.off{color:#a3a3a3}
.ic{width:18px;height:18px;flex:none}
.ic.lg{width:20px;height:20px}
.sigma{width:14px;font-size:19px;margin:0 6px 0 2px}
.caret{display:inline-block;width:14px;height:14px;flex:none;position:relative}
.caret:after{content:"";position:absolute;left:4px;top:6px;border:3.500px solid transparent;border-top:4px solid #222;border-bottom:0}
.caret.sm{width:8px;margin-left:-5px}
.caret.sm:after{left:1px}
.sep{width:1px;height:20px;background:#c8c8c8;flex:none}
.combo{display:inline-flex;align-items:center;gap:5px;height:26px;background:#fff;padding-left:2px;flex:none;overflow:hidden;white-space:nowrap}
.combo-2d{width:55px;height:22px;margin-right:-9px;padding-left:3px}
.w53{width:53px}.w67{width:67px}.w70{width:70px}.w64{width:64px}.w55{width:55px}

.dock-head{display:flex;align-items:center;height:19px;background:#eeeeee;border:1px solid #a8a8a8;border-bottom:2px solid #a8a8a8;padding:0 4px 0 0;font-size:16px}
.dock-title{padding-left:1px;font-size:16px}
.pin{width:12px;height:14px;flex:none}
.x{width:22px;text-align:center;color:#333;font-size:17px;font-family:"DejaVu Sans",sans-serif}
.side{display:flex;flex-direction:column;background:#f0f0f0;border-right:1px solid #aaa;height:790px}
.side .dock-head{border-left:0}
.side-btn{background:#efefef;border-bottom:1px solid #ccc}
.b1{height:29px;margin-top:3px}.b2{height:29px}.b3{height:33px}
.side-list{flex:1;display:flex;background:#fff;border-top:1px solid #aaa;border-bottom:1px solid #aaa}
.tree{width:29px;position:relative;display:flex;flex-direction:column;overflow:hidden;font-size:14px;line-height:18px}
.tree span{display:flex;justify-content:flex-end;width:11px;white-space:nowrap;height:18px}
.t1{margin-top:1px}.t2{margin-top:339px}.t3{margin-top:65px}.t4{margin-top:42px}.t5{margin-top:44px}.tree .t6{margin-top:20px;width:19px}.t7{margin-top:3px}
.tree em{background:#fc0;display:block;flex:none}
.tree u{background:#ddd;display:block;text-decoration:none;flex:none}
.vbar{width:19px;display:flex;flex-direction:column;align-items:center;background:#f0f0f0}
.up,.down,.arr{color:#555;font-weight:700;font-family:"DejaVu Sans",sans-serif;font-size:14px;line-height:14px;flex:none}
.vbar .up{margin-top:8px;height:14px}
.vbar .thumb{background:#cdcdcd;width:19px;height:599px;margin-top:34px}
.vbar .down{margin-top:2px;height:14px}

.drawings{display:flex;flex-direction:column;padding:0 1px 0 6px;background:#f0f0f0;position:relative;border-left:0;height:797px}
.drawings .dock-head{flex:none;border-left:1px solid #a8a8a8;padding-right:0}
.tabs{display:flex;align-items:flex-end;height:27px;padding-left:2px;flex:none}
.tab{height:21px;padding:0 3px;background:#eee;border:1px solid #ddd;margin-left:3px;white-space:nowrap;line-height:20px}
.tab.on{height:24px;background:#fff;border-bottom:0;margin-left:0;width:106px;line-height:23px;padding-left:7px}
.tabpane{flex:1;background:#fff;padding:6px 5px 0 7px;border-right:1px solid #a0a0a0;border-left:1px solid #a0a0a0}
.dtools{display:flex;height:28px;background:#f8f8f8;border-bottom:2px solid #b5b5b5}
.dbtn{display:flex;align-items:center;justify-content:center;background:#f0f0f0;border:1px solid #c4c4c4;border-bottom:0;height:26px}
.w71{width:71px;margin-right:1px}.w15{width:16px;margin-right:1px}
.chev{width:15px;align-items:flex-start;font-weight:700;line-height:16px;margin-right:0}
.dtable{position:relative;margin-top:4px;border:2px solid #b9b9b9;border-bottom:0;height:660px;overflow:hidden;background:#f0f0f0}
.dhead{display:flex;height:32px;align-items:center}
.dhead .dnum{width:27px;height:32px;background:#f0f0f0}
.dname{width:189px;height:32px;background:linear-gradient(#fbdca6,#f0b565);color:#7a1a66;text-align:center;line-height:32px;border-right:1px solid #fff}
.dratio{width:59px;height:32px;background:#f3f3f3;overflow:hidden;white-space:nowrap;line-height:32px;padding-left:3px}
.drow{display:flex;height:23.700px;background:#ff0;width:275px;border-bottom:1px solid #d5d5d5;line-height:22px;color:#111}
.drow .dnum{width:27px;text-align:center;background:#f0f0f0;border-right:1px solid #ccc;font-family:"Liberation Mono",monospace;font-size:13px}
.dsub{width:35px;border-left:10px solid #ff0;position:relative;flex:none}
.dsub:before{content:"";position:absolute;left:0;top:0;bottom:0;border-left:1px solid #ccb}
.dsub:after{content:"";position:absolute;left:2px;right:6px;top:12px;border-top:1px solid #999}
.dtxt{width:154px;white-space:nowrap;overflow:hidden;border-right:1px solid #d5d5d5}
.dr{padding-left:1px;width:59px}
.m{font:12.500px/20px "Liberation Mono",monospace}
.dscroll{position:absolute;left:275px;top:0;width:20px;bottom:0;background:#f0f0f0;display:flex;flex-direction:column;align-items:center}
.dscroll .up{margin-top:8px;height:14px}
.dscroll .thumb{width:19px;height:66px;background:#cdcdcd;margin-top:40px}

.main{display:flex;flex-direction:column;background:#f0f0f0;height:797px}
.bar{display:flex;align-items:center;gap:7px;height:28px;padding-left:6px;background:#f7f7f7;white-space:nowrap;overflow:hidden;flex:none;margin-left:3px}
.r1{margin-top:2px;width:986px;gap:8px}
.r2{margin-top:7px;padding-left:9px}
.r3{margin-top:7px;height:28px}
.r4{margin-top:5px;height:29px}
.grip{width:2px;height:20px;flex:none;background:repeating-linear-gradient(#aaa 0 2px,transparent 2px 5px)}
.grip.first{margin-right:-3px}
.r1 .grip.first{margin-right:-8px}
.r4 .grip.first{margin-right:-6px}
.grip.gap{margin:0 3px}
.tool.active{background:#e3eef9;border:1px solid #4a9ee0;height:28px;padding:0 4px 0 2px;margin:0 -1px;gap:3px}
.tool.tight{padding:0 3px;margin:0;gap:4px}
.c14{margin-left:-6px}
.r2 .sep{margin:0 2px 0 1px}
.tight-c{margin-right:-5px}
.r3 .caret{margin:0 -2px}
.canvas{flex:none;height:422px;background:#000;margin-top:2px}
.cad{display:block}
.cad .gl{fill:none;stroke:#0c0;stroke-width:1.500}
symbol .g,.g{fill:none;stroke:#0f0;stroke-width:2.400}
symbol .c,.c{fill:url(#h);stroke:#ff0;stroke-width:1.400}
symbol .y,.y{fill:none;stroke:#ff0;stroke-width:1.400}
symbol .l,.l{fill:#f00}
.txt{stroke:#3e3e3e;stroke-width:1;stroke-dasharray:9 23 5 41 7 19;fill:none}
.txt2{stroke:#666;stroke-width:1.500;stroke-dasharray:2 1;fill:none}

.lower{flex:1;display:flex;background:#fff;margin-left:-5px}
.dock-grip{width:19px;flex:none;background:#ececec radial-gradient(#aaa 1px,transparent 1.500px) 0 0/5px 6px}
.lower-body{flex:1;display:flex;flex-direction:column;min-width:0}
.r5{height:38px;margin:0;padding:6px 0 0 325px;gap:5px;background:#f5f5f5}
.r5 .tool.tight{height:29px;margin:0 -5px 0 0;width:66px}
.r5 .tool{gap:4px}
.r5 .grip.gap{margin:0 6px}
.r5 .sep{margin:0 4px}
.lbl{color:#777;font-size:15px}
.lbl.y{margin-left:8px}
.r5 .combo{margin-left:-2px}
.spin{width:60px;height:26px;border:1px solid #999;background:#f2f2f2;display:flex;align-items:center;justify-content:flex-end;color:#777;padding-right:18px;position:relative;font-size:16px;margin-left:-5px}
.spin.wide{width:70px;margin-left:0}
.spin .arrows{position:absolute;right:6px;top:6px;width:6px;height:14px;background:linear-gradient(#555 0 3px,transparent 3px 9px,#555 9px 12px,transparent 12px)}
.check-sm{width:14px;height:14px;border:1px solid #999;background:#fff;margin-left:1px;flex:none}
.rot{margin-left:6px}
.r6{height:30px;margin:6px 0 0;padding-left:322px;gap:9px;background:#f5f5f5}
.r6 .tool{gap:5px}
.close-btn{margin-left:3px}
.rebar{margin-top:2px;border-top:1px solid #ccc}
.rb-row{display:grid;grid-template-columns:543px 207px 195px 53px;height:24px;border-bottom:2px solid #ccc;text-align:center;line-height:24px}
.rb-row.head{height:26px;background:#f7f7f7}
.rb-row span{border-right:1px solid #ccc;white-space:nowrap;overflow:hidden}
.rb-row .c1{padding-left:287px}
.rb-row .c4{text-align:left;padding-left:3px}

.dialog{position:absolute;left:45px;top:257px;width:669px;height:515px;background:#f0f0f0;border:1px solid #a6a6a6;border-right:2px solid #a6a6a6;border-bottom:2px solid #a6a6a6;display:flex;flex-direction:column}
.d-title{height:35px;display:flex;align-items:center;background:#fff;flex:none;padding-bottom:7px}
.d-logo{width:20px;height:20px;margin-left:3px;flex:none}
.d-cap{color:#9a9a9a;margin-left:5px}
.wb{width:60px;height:20px;position:relative;flex:none}
.min:after{content:"";position:absolute;left:28px;top:10px;width:12px;border-top:1px solid #777}
.max:after{content:"";position:absolute;left:24px;top:4px;width:12px;height:12px;border:1px solid #ddd}
.close{width:60px}
.close:before,.close:after{content:"";position:absolute;left:23px;top:9px;width:17px;border-top:1px solid #666;transform:rotate(45deg)}
.close:after{transform:rotate(-45deg)}
.d-top{display:flex;height:325px;flex:none;border-bottom:2px solid #d8d8d8}
.d-list{width:452px;height:320px;margin-left:2px;border:2px solid #a4a4b0;display:flex;flex-direction:column;background:#f0f0f0}
.d-view{position:relative;height:294px;background:#fff;overflow:hidden;flex:none}
.d-head{display:grid;grid-template-columns:82px 82px 1fr;height:29px;line-height:29px}
.d-head span{padding-left:7px}
.d-head span:nth-child(-n+2){border-right:1px solid #ddd}
.d-rows{display:grid;grid-template-columns:82px 82px 1fr;grid-auto-rows:21.200px;line-height:21px;padding-top:1px;width:429px;overflow:hidden;height:265px}
.d-rows>span{padding-left:7px;white-space:nowrap;overflow:hidden}
.d-rows>span:nth-child(3n){padding-left:5px;overflow:hidden}
.n{font-size:13px}
.d-rows>.n{font-size:12.500px}
.d-vbar{position:absolute;right:0;top:0;width:21px;height:294px;background:#f0f0f0;display:flex;flex-direction:column;align-items:center}
.d-vbar .up{margin-top:5px;height:14px}
.d-vbar .thumb{width:19px;height:49px;background:#cdcdcd;margin-top:2px}
.d-vbar .down{margin-top:206px;height:14px}
.d-hbar{flex:1;display:flex;align-items:center;padding-left:7px}
.d-hbar .thumb{width:361px;height:19px;background:#cdcdcd;margin-left:9px}
.d-hbar .arr{width:8px;font-size:17px}
.d-hbar .thumb+.arr{margin-left:29px}
fieldset{margin:0;padding:0;border:0;border-top:1px solid #d8d8d8;min-width:0}
legend{padding:0;line-height:18px}
.d-group{flex:1;display:flex;flex-direction:column;margin:-2px 0 0 2px;height:324px;padding:0;border-left:1px solid #ddd}
.d-group legend{margin-left:9px}
.ck{display:flex;align-items:center;gap:4px;height:20px;white-space:nowrap;margin-left:30px}
.ck.k1{margin-top:44px}.ck.k2{margin-top:28px}.ck.k3{margin-top:26px}.ck.k4{margin-top:22px}.ck.k5{margin-top:24px}
.box{width:15px;height:15px;border:2px solid #888;background:#fff;position:relative;flex:none}
.box:after{content:"";position:absolute;left:3px;top:0;width:5px;height:9px;border:solid #555;border-width:0 1.500px 1.500px 0;transform:rotate(40deg)}
.d-tips{flex:1;padding:0 0 0 5px;margin:5px 0 0;border-top:2px solid #d8d8d8}
.d-tips legend{margin-left:6px;padding:0;line-height:16px}
.d-tips p{margin:0;line-height:16.400px;white-space:nowrap;font-size:15px}
.d-tips p:first-of-type{margin-top:3px}
.d-tips .ind{padding-left:10px}
.ring{position:absolute;left:0;top:0;pointer-events:none}
.ring ellipse{fill:none;stroke:#e8282e;stroke-width:1}
```
